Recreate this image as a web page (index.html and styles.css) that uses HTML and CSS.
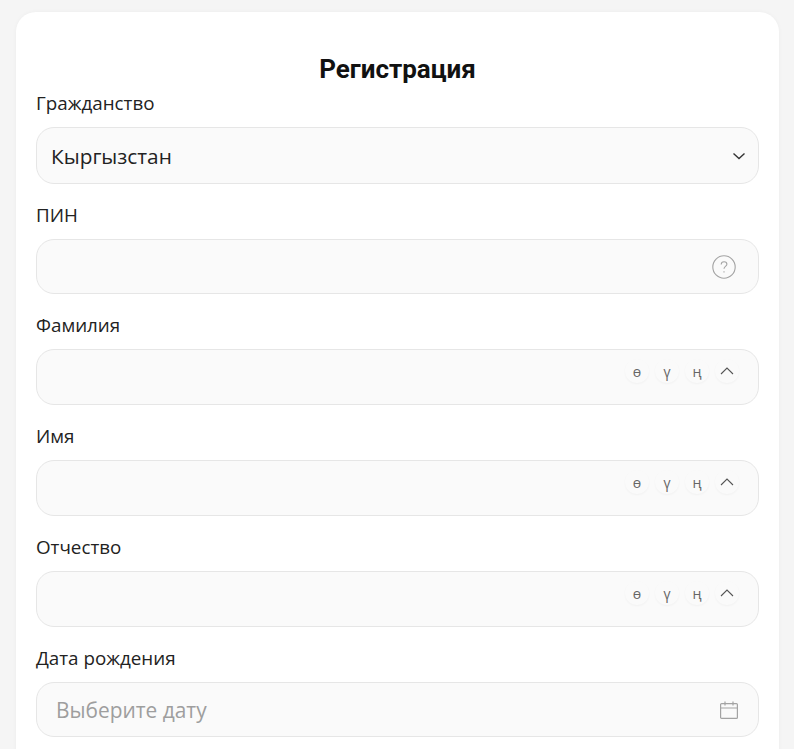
FILE: index.html
```html
<!DOCTYPE html>
<html lang="ru">
<head>
    <meta charset="UTF-8">
    <meta name="viewport" content="width=device-width, initial-scale=1.0">
    <title>Регистрация</title>
    <link rel="stylesheet" href="styles.css">
</head>
<body>
    <div class="card">
        <h1 class="title">Регистрация</h1>

        <div class="field">
            <label class="label">Гражданство</label>
            <div class="box box-select">
                <span class="value">Кыргызстан</span>
                <svg class="chevron" width="14" height="14" viewBox="0 0 14 14" fill="none" stroke="#333" stroke-width="1.4"><path d="M1.5 4.5 7 9.5l5.5-5"/></svg>
            </div>
        </div>

        <div class="field field-pin">
            <label class="label">ПИН</label>
            <div class="box box-pin">
                <svg class="help" width="24" height="24" viewBox="0 0 24 24" fill="none" stroke="#a3a3a3" stroke-width="1.1"><circle cx="12" cy="12" r="11.2"/><path d="M9.2 9.6c0-1.7 1.2-2.8 2.9-2.8 1.6 0 2.8 1 2.8 2.4 0 2.2-2.9 2.3-2.9 4.6"/><path d="M12 16.2v1.4"/></svg>
            </div>
        </div>

        <div class="field">
            <label class="label">Фамилия</label>
            <div class="box box-keys">
                <div class="keys">
                    <span class="key">ө</span>
                    <span class="key">ү</span>
                    <span class="key">ң</span>
                    <span class="key"><svg width="14" height="8" viewBox="0 0 14 8" fill="none" stroke="#555" stroke-width="1.1"><path d="M1 7 7 1l6 6"/></svg></span>
                </div>
            </div>
        </div>

        <div class="field">
            <label class="label">Имя</label>
            <div class="box box-keys">
                <div class="keys">
                    <span class="key">ө</span>
                    <span class="key">ү</span>
                    <span class="key">ң</span>
                    <span class="key"><svg width="14" height="8" viewBox="0 0 14 8" fill="none" stroke="#555" stroke-width="1.1"><path d="M1 7 7 1l6 6"/></svg></span>
                </div>
            </div>
        </div>

        <div class="field">
            <label class="label">Отчество</label>
            <div class="box box-keys">
                <div class="keys">
                    <span class="key">ө</span>
                    <span class="key">ү</span>
                    <span class="key">ң</span>
                    <span class="key"><svg width="14" height="8" viewBox="0 0 14 8" fill="none" stroke="#555" stroke-width="1.1"><path d="M1 7 7 1l6 6"/></svg></span>
                </div>
            </div>
        </div>

        <div class="field">
            <label class="label">Дата рождения</label>
            <div class="box box-date">
                <span class="placeholder">Выберите дату</span>
                <svg class="calendar" width="18" height="18" viewBox="0 0 18 18" fill="none" stroke="#a3a3a3" stroke-width="1.2"><rect x="0.6" y="2.6" width="16.8" height="14.8" rx="1"/><path d="M0.6 7h16.8M5 0.5v4M13 0.5v4"/></svg>
            </div>
        </div>
    </div>
</body>
</html>
```

FILE: styles.css
```css
html, body {
    height: 100%;
    overflow: hidden;
}

body {
    margin: 0;
    padding: 12px 15px 0 16px;
    box-sizing: border-box;
    background-color: #f5f5f5;
    font-family: "Open Sans", sans-serif;
    color: #1a1a1a;
}

.card {
    background: #fff;
    border-radius: 20px;
    padding: 43px 20px 20px;
    min-height: 800px;
    box-sizing: border-box;
    box-shadow: 0 0 4px rgba(0, 0, 0, 0.04);
}

.title {
    margin: 0 0 7px;
    font-family: Roboto, sans-serif;
    font-size: 26px;
    line-height: 28px;
    font-weight: 700;
    color: #111;
    text-align: center;
}

.field {
    margin-bottom: 18px;
}

.label {
    display: block;
    font-size: 18.8px;
    line-height: 26px;
    margin-bottom: 11px;
    color: #222;
}

.box {
    display: flex;
    align-items: center;
    justify-content: space-between;
    height: 56px;
    box-sizing: border-box;
    background: #fafafa;
    border: 1px solid #e6e6e6;
    border-radius: 18px;
}

.box-select {
    height: 57px;
    padding: 0 12px 0 14px;
}

.box-pin {
    height: 55px;
    justify-content: flex-end;
    padding-right: 22px;
}

.box-keys {
    justify-content: flex-end;
    align-items: flex-start;
    padding: 9px 19px 0 0;
}

.box-date {
    height: 55px;
    padding: 0 20px 0 19px;
}

.value {
    font-size: 20.8px;
    color: #222;
}

.placeholder {
    font-size: 20.9px;
    color: #9e9e9e;
}

.keys {
    display: flex;
    gap: 6px;
}

.key {
    display: flex;
    align-items: center;
    justify-content: center;
    width: 24px;
    height: 24px;
    border-radius: 50%;
    font-size: 14px;
    color: #666;
    background: #fafafa;
    box-shadow: 0 1px 2px rgba(0, 0, 0, 0.04);
}
```
